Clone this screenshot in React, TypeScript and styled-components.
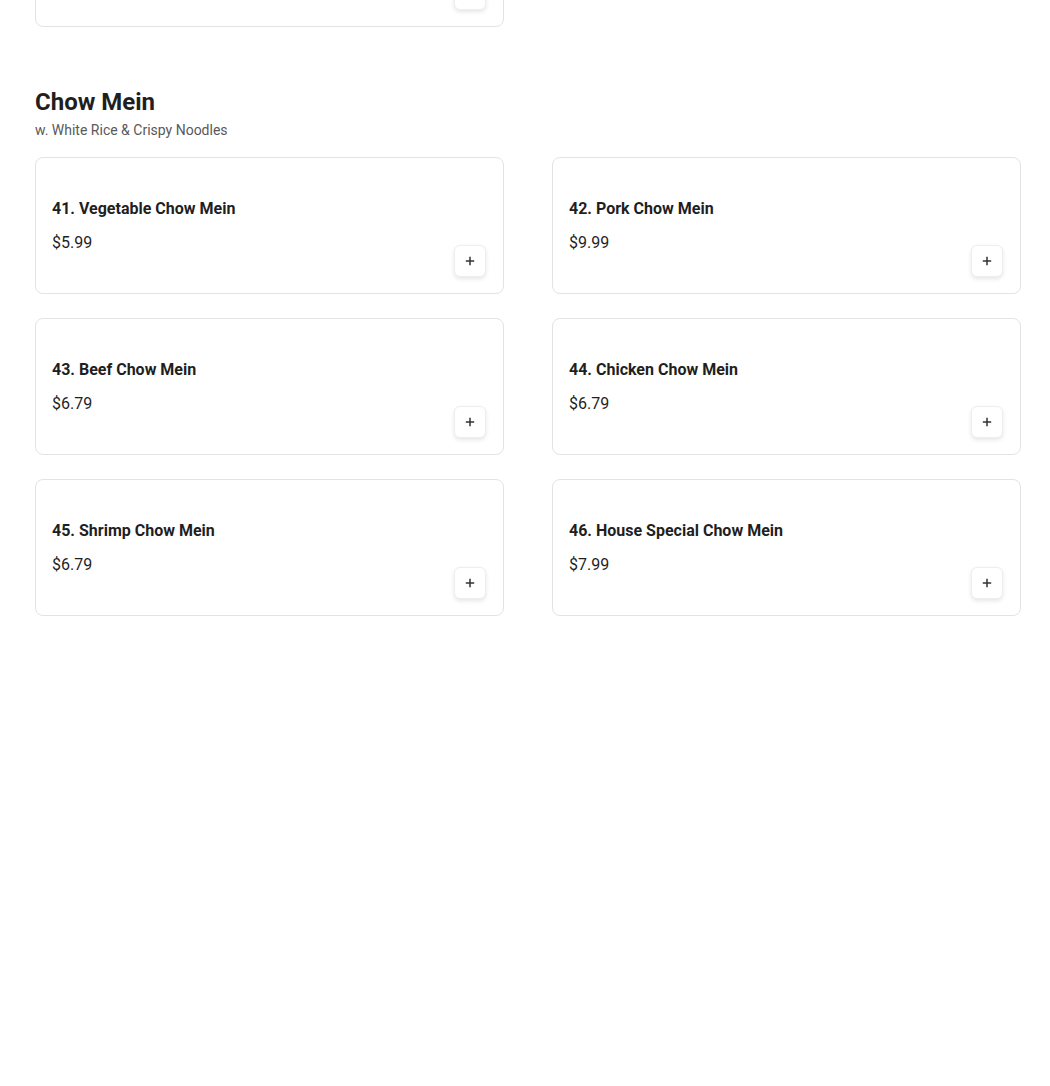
import React from "react";
import styled, { createGlobalStyle } from "styled-components";

const Global = createGlobalStyle`
  html, body { margin: 0; padding: 0; background: #fff; }
  body { font-family: Roboto, "Noto Sans", "Liberation Sans", sans-serif; color: #1f1f1f; }
  * { box-sizing: border-box; }
`;

const Page = styled.div`
  padding: 0 29px 0 35px;
`;

const PrevSection = styled.section`
  margin-top: -110px;
`;

const Section = styled.section`
  margin-top: 59px;
`;

const Heading = styled.h2`
  margin: 0;
  font-size: 24px;
  line-height: 32px;
  font-weight: 700;
  color: #1f1f1f;
`;

const Sub = styled.p`
  margin: 2px 0 0;
  font-size: 14px;
  line-height: 20px;
  color: #595959;
`;

const Grid = styled.div<{ $top?: number }>`
  display: grid;
  grid-template-columns: 1fr 1fr;
  column-gap: 48px;
  row-gap: 24px;
  margin-top: ${(p) => p.$top ?? 0}px;
`;

const Card = styled.div`
  display: flex;
  justify-content: space-between;
  align-items: flex-end;
  height: 137px;
  padding: 16px 17px 16px 16px;
  border: 1px solid #e3e3e3;
  border-radius: 8px;
  background: #fff;
`;

const Info = styled.div`
  display: flex;
  flex-direction: column;
  padding: 23px 0 22px;
`;

const Title = styled.div`
  font-size: 16px;
  line-height: 24px;
  font-weight: 700;
  color: #1f1f1f;
`;

const Price = styled.div`
  margin-top: 10px;
  font-size: 16px;
  line-height: 24px;
  color: #1f1f1f;
`;

const AddButton = styled.button`
  width: 32px;
  height: 32px;
  padding: 0;
  display: flex;
  align-items: center;
  justify-content: center;
  background: #fff;
  border: 1px solid #eeeeee;
  border-radius: 6px;
  box-shadow: 0 2px 4px rgba(0, 0, 0, 0.1);
  cursor: pointer;
`;

const Plus = () => (
  <svg width="10" height="10" viewBox="0 0 10 10">
    <path d="M5 0.8v8.4M0.8 5h8.4" stroke="#333" strokeWidth="1.5" />
  </svg>
);

type Item = { name: string; price: string };

const items: Item[] = [
  { name: "41. Vegetable Chow Mein", price: "$5.99" },
  { name: "42. Pork Chow Mein", price: "$9.99" },
  { name: "43. Beef Chow Mein", price: "$6.79" },
  { name: "44. Chicken Chow Mein", price: "$6.79" },
  { name: "45. Shrimp Chow Mein", price: "$6.79" },
  { name: "46. House Special Chow Mein", price: "$7.99" },
];

const MenuCard = ({ item }: { item?: Item }) => (
  <Card>
    {item ? (
      <Info>
        <Title>{item.name}</Title>
        <Price>{item.price}</Price>
      </Info>
    ) : (
      <span />
    )}
    <AddButton aria-label="Add">
      <Plus />
    </AddButton>
  </Card>
);

export default function App() {
  return (
    <Page>
      <Global />
      <PrevSection>
        <Grid>
          <MenuCard />
        </Grid>
      </PrevSection>
      <Section>
        <Heading>Chow Mein</Heading>
        <Sub>w. White Rice &amp; Crispy Noodles</Sub>
        <Grid $top={17}>
          {items.map((it) => (
            <MenuCard key={it.name} item={it} />
          ))}
        </Grid>
      </Section>
    </Page>
  );
}
